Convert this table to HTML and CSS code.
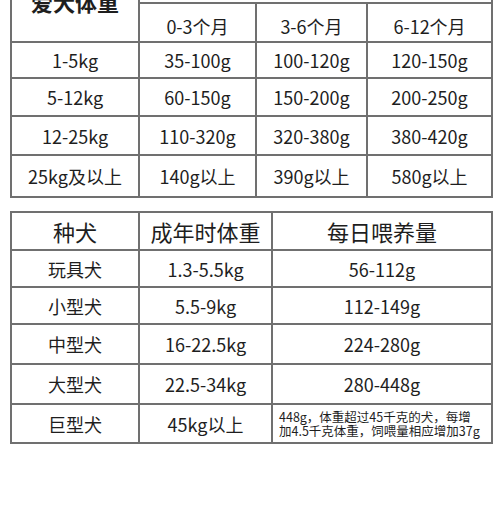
FILE: index.html
```html
<!DOCTYPE html>
<html lang="zh">
<head>
<meta charset="utf-8">
<link rel="stylesheet" href="styles.css">
</head>
<body>
<div class="page">
  <table class="grid puppy">
    <colgroup>
      <col class="p1"><col class="p2"><col class="p3"><col class="p4">
    </colgroup>
    <tr class="r-top">
      <td rowspan="2" class="title">爱犬体重</td>
      <td colspan="3" class="head">幼犬月龄</td>
    </tr>
    <tr class="r-sub">
      <td>0-3个月</td><td>3-6个月</td><td>6-12个月</td>
    </tr>
    <tr class="r1"><td>1-5kg</td><td>35-100g</td><td>100-120g</td><td>120-150g</td></tr>
    <tr class="r2"><td>5-12kg</td><td>60-150g</td><td>150-200g</td><td>200-250g</td></tr>
    <tr class="r3"><td>12-25kg</td><td>110-320g</td><td>320-380g</td><td>380-420g</td></tr>
    <tr class="r4"><td>25kg及以上</td><td>140g以上</td><td>390g以上</td><td>580g以上</td></tr>
  </table>

  <table class="grid adult">
    <colgroup>
      <col class="a1"><col class="a2"><col class="a3">
    </colgroup>
    <tr class="h"><td class="head">种犬</td><td class="head">成年时体重</td><td class="head">每日喂养量</td></tr>
    <tr class="b1"><td>玩具犬</td><td>1.3-5.5kg</td><td>56-112g</td></tr>
    <tr class="b2"><td>小型犬</td><td>5.5-9kg</td><td>112-149g</td></tr>
    <tr class="b3"><td>中型犬</td><td>16-22.5kg</td><td>224-280g</td></tr>
    <tr class="b4"><td>大型犬</td><td>22.5-34kg</td><td>280-448g</td></tr>
    <tr class="b5"><td>巨型犬</td><td>45kg以上</td><td class="note">448g，体重超过45千克的犬，每增<br>加4.5千克体重，饲喂量相应增加37g</td></tr>
  </table>
</div>
</body>
</html>
```

FILE: styles.css
```css
html, body {
  margin: 0;
  padding: 0;
  background: #ffffff;
}

.page {
  width: 500px;
  height: 520px;
  overflow: hidden;
  padding-left: 10px;
  box-sizing: border-box;
  font-family: "Noto Sans CJK SC", "Noto Sans", sans-serif;
  color: #1e1e1e;
}

.grid {
  border-collapse: collapse;
  table-layout: fixed;
  width: 481px;
}

.grid td {
  border: 2px solid #707070;
  text-align: center;
  vertical-align: middle;
  padding: 0;
  font-size: 18px;
  line-height: 24px;
  white-space: nowrap;
}

.puppy {
  margin-top: -35px;
}

.p1 { width: 128px; }
.p2 { width: 117px; }
.p3 { width: 111px; }
.p4 { width: 125px; }

.puppy .title {
  font-size: 22px;
  font-weight: 700;
  padding-bottom: 6px;
}

.r-top td { height: 35px; }
.r-sub td { height: 31px; padding-top: 6px; }
.r1 td { height: 34px; }
.r2 td { height: 36px; }
.r3 td { height: 37px; }
.r4 td { height: 40px; }

.adult {
  margin-top: 13px;
}

.a1 { width: 128px; }
.a2 { width: 133px; }
.a3 { width: 220px; }

.adult .head {
  font-size: 22px;
  height: 36px;
}

.b1 td { height: 35px; }
.b2 td { height: 35px; }
.b3 td { height: 38px; }
.b4 td { height: 38px; }
.b5 td { height: 37px; }

.adult .note {
  font-size: 12.5px;
  line-height: 14px;
  text-align: left;
  padding-left: 6px;
}
```
